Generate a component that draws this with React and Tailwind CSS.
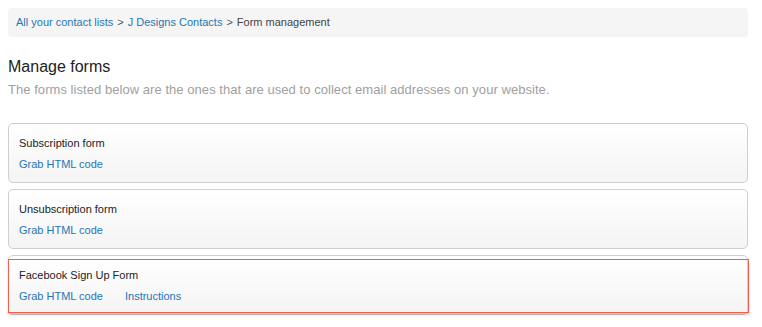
export default function App() {
  const forms = [
    { name: 'Subscription form', links: ['Grab HTML code'] },
    { name: 'Unsubscription form', links: ['Grab HTML code'] },
    { name: 'Facebook Sign Up Form', links: ['Grab HTML code', 'Instructions'], highlight: true },
  ];

  return (
    <div className="min-h-screen bg-white px-2 pt-2 font-['Liberation_Sans',Arial,sans-serif] text-[#333]">
      {/* breadcrumb */}
      <div className="flex h-[29px] w-[740px] items-center rounded-[4px] bg-[#f5f5f5] px-2 text-[11px]">
        <a className="text-[#2675b3]">All your contact lists</a>
        <span className="px-1 text-[#555]">&gt;</span>
        <a className="text-[#2675b3]">J Designs Contacts</a>
        <span className="px-1 text-[#555]">&gt;</span>
        <span className="text-[#444]">Form management</span>
      </div>

      <h2 className="mt-[20px] text-[16px] leading-[20px] text-[#222]">Manage forms</h2>
      <p className="mt-[4px] text-[13px] leading-[17px] tracking-[0.05px] text-[#a0a0a0]">
        The forms listed below are the ones that are used to collect email addresses on your website.
      </p>

      <div className="mt-[25px] flex w-[740px] flex-col gap-[6px]">
        {forms.map((f) => (
          <div
            key={f.name}
            className="relative h-[60px] rounded-[5px] border border-[#cfcfcf] bg-gradient-to-b from-white to-[#f4f4f4] px-[10px] pt-[12px] text-[11px]"
          >
            <div className="leading-[14px] text-[#222]">{f.name}</div>
            <div className="mt-[7px] flex gap-[22px] leading-[14px] text-[#2675b3]">
              {f.links.map((l) => (
                <a key={l}>{l}</a>
              ))}
            </div>
            {f.highlight && (
              <div className="pointer-events-none absolute left-[-1px] right-[-2px] top-[3px] bottom-[1px] border-[1.5px] border-[#f0604e] shadow-[0_2px_2px_rgba(0,0,0,0.18)]" />
            )}
          </div>
        ))}
      </div>
    </div>
  );
}
